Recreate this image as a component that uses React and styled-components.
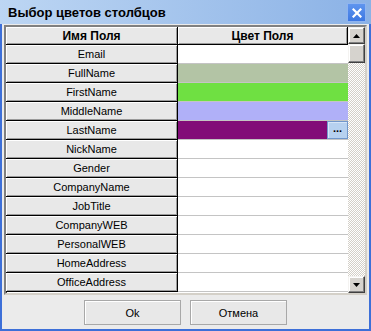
import React from 'react'
import styled, { createGlobalStyle } from 'styled-components'

const GlobalStyle = createGlobalStyle`
  html, body { margin: 0; padding: 0; background: #ffffff; }
  body { font-family: "Liberation Sans", Arial, sans-serif; }
`;

const FIELDS = [
  { name: 'Email', color: '#ffffff' },
  { name: 'FullName', color: '#b3c4a5' },
  { name: 'FirstName', color: '#6fe042' },
  { name: 'MiddleName', color: '#b0b0f8' },
  { name: 'LastName', color: '#820c78', picker: true },
  { name: 'NickName', color: '#ffffff' },
  { name: 'Gender', color: '#ffffff' },
  { name: 'CompanyName', color: '#ffffff' },
  { name: 'JobTitle', color: '#ffffff' },
  { name: 'CompanyWEB', color: '#ffffff' },
  { name: 'PersonalWEB', color: '#ffffff' },
  { name: 'HomeAddress', color: '#ffffff' },
  { name: 'OfficeAddress', color: '#ffffff' },
];

function App() {
  return (
    <>
      <GlobalStyle />
      <Window>
        <TitleBar>
          <Title>Выбор цветов столбцов</Title>
          <CloseButton>
            <svg width="10" height="10" viewBox="0 0 10 10">
              <path d="M1.5 1.5 L8.5 8.5 M8.5 1.5 L1.5 8.5" stroke="#fff" strokeWidth="2.2" strokeLinecap="square" />
            </svg>
          </CloseButton>
        </TitleBar>
        <Body>
          <GridFrame>
            <GridColumns>
              <Table>
                <Row>
                  <HeadCell>Имя Поля</HeadCell>
                  <HeadCell>Цвет Поля</HeadCell>
                </Row>
                {FIELDS.map((f) => (
                  <Row key={f.name}>
                    <NameCell>{f.name}</NameCell>
                    <ColorCell $color={f.color}>
                      {f.picker && <PickButton>...</PickButton>}
                    </ColorCell>
                  </Row>
                ))}
              </Table>
              <ScrollBar>
                <ScrollButton>
                  <svg width="7" height="4" viewBox="0 0 7 4"><path d="M3.5 0 L7 4 L0 4 Z" fill="#000" /></svg>
                </ScrollButton>
                <Thumb />
                <Track />
                <ScrollButton>
                  <svg width="7" height="4" viewBox="0 0 7 4"><path d="M0 0 L7 0 L3.5 4 Z" fill="#000" /></svg>
                </ScrollButton>
              </ScrollBar>
            </GridColumns>
          </GridFrame>
          <Footer>
            <DialogButton>Ok</DialogButton>
            <DialogButton>Отмена</DialogButton>
          </Footer>
        </Body>
      </Window>
    </>
  )
}

const Window = styled.div`
  width: 371px;
  height: 331px;
  display: flex;
  flex-direction: column;
  overflow: hidden;
`;

const TitleBar = styled.div`
  height: 24px;
  flex: none;
  display: flex;
  align-items: center;
  justify-content: space-between;
  padding: 0 5px 0 8px;
  background: linear-gradient(to right, #bdd6f3, #8bb2e6);
`;

const Title = styled.div`
  font-size: 13px;
  font-weight: bold;
  color: #000;
  padding-top: 1px;
`;

const CloseButton = styled.div`
  width: 19px;
  height: 19px;
  box-sizing: border-box;
  margin-top: 1px;
  display: flex;
  align-items: center;
  justify-content: center;
  background: linear-gradient(#5f95ee, #3d78e2);
  border: 1px solid #8fb4f0;
`;

const Body = styled.div`
  flex: 1;
  display: flex;
  flex-direction: column;
  background: #ebebeb;
  border: 2px solid #3d6fd8;
  border-top: none;
  padding: 1px 2px 0 2px;
`;

const GridFrame = styled.div`
  height: 270px;
  box-sizing: border-box;
  border-style: solid;
  border-width: 2px;
  border-color: #808080 #d4d0c8 #d4d0c8 #808080;
  box-shadow: inset 1px 1px 0 #404040;
  background: #fff;
  overflow: hidden;
`;

const GridColumns = styled.div`
  display: flex;
  height: 100%;
`;

const Table = styled.div`
  flex: 1;
  display: flex;
  flex-direction: column;
  overflow: hidden;
`;

const Row = styled.div`
  display: grid;
  grid-template-columns: 172px 170px;
  flex: none;
`;

const raised = `
  background: #e8e8e8;
  box-sizing: border-box;
  border-right: 1px solid #000;
  border-bottom: 1px solid #000;
  box-shadow: inset 1px 1px 0 #ffffff, inset -1px -1px 0 #9a9a9a;
  display: flex;
  align-items: center;
  justify-content: center;
  color: #000;
`;

const HeadCell = styled.div`
  ${raised}
  height: 18px;
  font-size: 12px;
  font-weight: bold;
`;

const NameCell = styled.div`
  ${raised}
  height: 19px;
  font-size: 11px;
  padding-bottom: 1px;
`;

const ColorCell = styled.div`
  height: 19px;
  box-sizing: border-box;
  background: ${(p) => p.$color};
  border-bottom: 1px solid #c4c4c4;
  display: flex;
  justify-content: flex-end;
`;

const PickButton = styled.div`
  width: 21px;
  height: 18px;
  box-sizing: border-box;
  background: #b6d1f0;
  border: 1px solid #7097cc;
  box-shadow: inset 1px 1px 0 #d6e6f8;
  font-size: 11px;
  font-weight: bold;
  line-height: 12px;
  text-align: center;
  color: #000;
`;

const ScrollBar = styled.div`
  width: 17px;
  flex: none;
  display: flex;
  flex-direction: column;
`;

const ScrollButton = styled.div`
  height: 17px;
  flex: none;
  box-sizing: border-box;
  background: #d6d3ce;
  border-style: solid;
  border-width: 1px;
  border-color: #f4f3f1 #404040 #404040 #f4f3f1;
  box-shadow: inset -1px -1px 0 #808080, inset 1px 1px 0 #ffffff;
  display: flex;
  align-items: center;
  justify-content: center;
`;

const Thumb = styled(ScrollButton)`
  height: 19px;
`;

const Track = styled.div`
  flex: 1;
  background: repeating-conic-gradient(#ffffff 0 25%, #d4d0c8 0 50%) 0 0 / 2px 2px;
`;

const Footer = styled.div`
  flex: 1;
  display: flex;
  justify-content: center;
  align-items: flex-start;
  gap: 9px;
  padding-top: 5px;
`;

const DialogButton = styled.div`
  width: 97px;
  height: 25px;
  box-sizing: border-box;
  border: 1px solid #a8a8a8;
  box-shadow: inset 1px 1px 0 #ffffff;
  background: #e8e8e8;
  display: flex;
  align-items: center;
  justify-content: center;
  font-size: 11px;
  color: #000;
`;

export default App
